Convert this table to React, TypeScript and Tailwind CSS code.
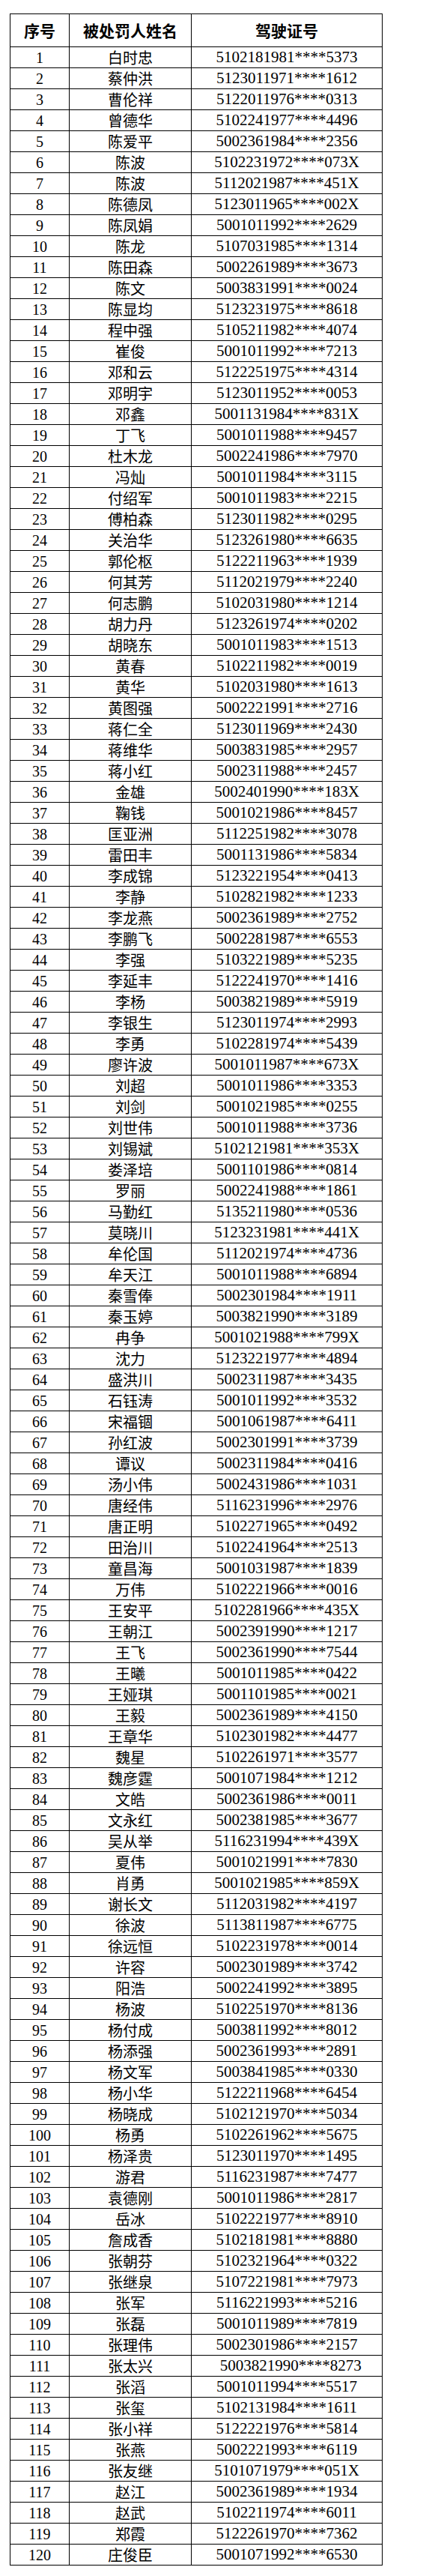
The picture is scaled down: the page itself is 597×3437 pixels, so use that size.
const rows: [string, string][] = [
  ['白时忠', '5102181981****5373'],
  ['蔡仲洪', '5123011971****1612'],
  ['曹伦祥', '5122011976****0313'],
  ['曾德华', '5102241977****4496'],
  ['陈爱平', '5002361984****2356'],
  ['陈波', '5102231972****073X'],
  ['陈波', '5112021987****451X'],
  ['陈德凤', '5123011965****002X'],
  ['陈凤娟', '5001011992****2629'],
  ['陈龙', '5107031985****1314'],
  ['陈田森', '5002261989****3673'],
  ['陈文', '5003831991****0024'],
  ['陈显均', '5123231975****8618'],
  ['程中强', '5105211982****4074'],
  ['崔俊', '5001011992****7213'],
  ['邓和云', '5122251975****4314'],
  ['邓明宇', '5123011952****0053'],
  ['邓鑫', '5001131984****831X'],
  ['丁飞', '5001011988****9457'],
  ['杜木龙', '5002241986****7970'],
  ['冯灿', '5001011984****3115'],
  ['付绍军', '5001011983****2215'],
  ['傅柏森', '5123011982****0295'],
  ['关治华', '5123261980****6635'],
  ['郭伦枢', '5122211963****1939'],
  ['何其芳', '5112021979****2240'],
  ['何志鹏', '5102031980****1214'],
  ['胡力丹', '5123261974****0202'],
  ['胡晓东', '5001011983****1513'],
  ['黄春', '5102211982****0019'],
  ['黄华', '5102031980****1613'],
  ['黄图强', '5002221991****2716'],
  ['蒋仁全', '5123011969****2430'],
  ['蒋维华', '5003831985****2957'],
  ['蒋小红', '5002311988****2457'],
  ['金雄', '5002401990****183X'],
  ['鞠钱', '5001021986****8457'],
  ['匡亚洲', '5112251982****3078'],
  ['雷田丰', '5001131986****5834'],
  ['李成锦', '5123221954****0413'],
  ['李静', '5102821982****1233'],
  ['李龙燕', '5002361989****2752'],
  ['李鹏飞', '5002281987****6553'],
  ['李强', '5103221989****5235'],
  ['李延丰', '5122241970****1416'],
  ['李杨', '5003821989****5919'],
  ['李银生', '5123011974****2993'],
  ['李勇', '5102281974****5439'],
  ['廖许波', '5001011987****673X'],
  ['刘超', '5001011986****3353'],
  ['刘剑', '5001021985****0255'],
  ['刘世伟', '5001011988****3736'],
  ['刘锡斌', '5102121981****353X'],
  ['娄泽培', '5001101986****0814'],
  ['罗丽', '5002241988****1861'],
  ['马勤红', '5135211980****0536'],
  ['莫晓川', '5123231981****441X'],
  ['牟伦国', '5112021974****4736'],
  ['牟天江', '5001011988****6894'],
  ['秦雪俸', '5002301984****1911'],
  ['秦玉婷', '5003821990****3189'],
  ['冉争', '5001021988****799X'],
  ['沈力', '5123221977****4894'],
  ['盛洪川', '5002311987****3435'],
  ['石钰涛', '5001011992****3532'],
  ['宋福锢', '5001061987****6411'],
  ['孙红波', '5002301991****3739'],
  ['谭议', '5002311984****0416'],
  ['汤小伟', '5002431986****1031'],
  ['唐经伟', '5116231996****2976'],
  ['唐正明', '5102271965****0492'],
  ['田治川', '5102241964****2513'],
  ['童昌海', '5001031987****1839'],
  ['万伟', '5102221966****0016'],
  ['王安平', '5102281966****435X'],
  ['王朝江', '5002391990****1217'],
  ['王飞', '5002361990****7544'],
  ['王曦', '5001011985****0422'],
  ['王娅琪', '5001101985****0021'],
  ['王毅', '5002361989****4150'],
  ['王章华', '5102301982****4477'],
  ['魏星', '5102261971****3577'],
  ['魏彦霆', '5001071984****1212'],
  ['文皓', '5002361986****0011'],
  ['文永红', '5002381985****3677'],
  ['吴从举', '5116231994****439X'],
  ['夏伟', '5001021991****7830'],
  ['肖勇', '5001021985****859X'],
  ['谢长文', '5112031982****4197'],
  ['徐波', '5113811987****6775'],
  ['徐远恒', '5102231978****0014'],
  ['许容', '5002301989****3742'],
  ['阳浩', '5002241992****3895'],
  ['杨波', '5102251970****8136'],
  ['杨付成', '5003811992****8012'],
  ['杨添强', '5002361993****2891'],
  ['杨文军', '5003841985****0330'],
  ['杨小华', '5122211968****6454'],
  ['杨晓成', '5102121970****5034'],
  ['杨勇', '5102261962****5675'],
  ['杨泽贵', '5123011970****1495'],
  ['游君', '5116231987****7477'],
  ['袁德刚', '5001011986****2817'],
  ['岳冰', '5102221977****8910'],
  ['詹成香', '5102181981****8880'],
  ['张朝芬', '5102321964****0322'],
  ['张继泉', '5107221981****7973'],
  ['张军', '5116221993****5216'],
  ['张磊', '5001011989****7819'],
  ['张理伟', '5002301986****2157'],
  // this one sits a little to the right in the source sheet (leading space)
  ['张太兴', '\u20025003821990****8273'],
  ['张滔', '5001011994****5517'],
  ['张玺', '5102131984****1611'],
  ['张小祥', '5122221976****5814'],
  ['张燕', '5002221993****6119'],
  ['张友继', '5101071979****051X'],
  ['赵江', '5002361989****1934'],
  ['赵武', '5102211974****6011'],
  ['郑霞', '5122261970****7362'],
  ['庄俊臣', '5001071992****6530'],
]

const cell = 'flex items-center justify-center border-r border-b border-black'
const cjk = "font-['Noto_Sans_CJK_SC',sans-serif]"
const serif = "font-['Liberation_Serif',serif]"

export default function App() {
  return (
    <div className="bg-white min-h-[3437px] pt-[18px] pl-[13px] text-black">
      <div className="grid w-[498px] grid-cols-[79px_163px_255px] border-l border-t border-black">
        <div className={`${cell} h-[44px] ${cjk} text-[21px] font-bold leading-none`}>序号</div>
        <div className={`${cell} h-[44px] ${cjk} text-[21px] font-bold leading-none`}>被处罚人姓名</div>
        <div className={`${cell} h-[44px] ${cjk} text-[21px] font-bold leading-none`}>驾驶证号</div>
        {rows.map(([name, id], i) => (
          <div key={i} className="contents">
            <div className={`${cell} h-[28px] ${serif} text-[20px] leading-none`}>{i + 1}</div>
            <div className={`${cell} h-[28px] ${cjk} text-[20px] leading-none`}>{name}</div>
            <div className={`${cell} h-[28px] ${serif} text-[21px] leading-none whitespace-pre`}>{id}</div>
          </div>
        ))}
      </div>
    </div>
  )
}
